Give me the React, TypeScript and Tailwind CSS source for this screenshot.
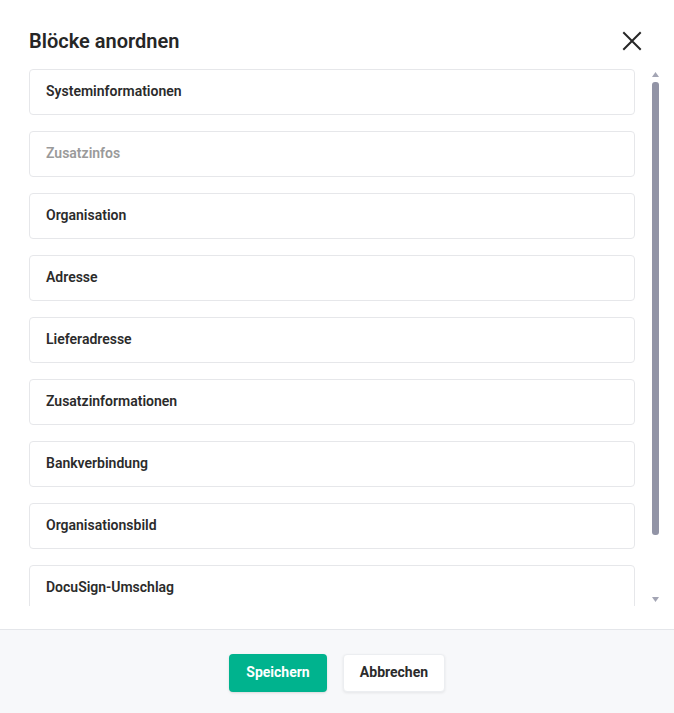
import React from "react";

const items: { label: string; muted?: boolean }[] = [
  { label: "Systeminformationen" },
  { label: "Zusatzinfos", muted: true },
  { label: "Organisation" },
  { label: "Adresse" },
  { label: "Lieferadresse" },
  { label: "Zusatzinformationen" },
  { label: "Bankverbindung" },
  { label: "Organisationsbild" },
  { label: "DocuSign-Umschlag" },
];

export default function App() {
  return (
    <div
      className="w-[674px] h-[713px] bg-white flex flex-col overflow-hidden"
      style={{ fontFamily: "Roboto, 'Noto Sans', sans-serif" }}
    >
      <div className="flex items-center justify-between pl-[29px] pr-[31px] pt-[27px] h-[55px] shrink-0">
        <h2 className="text-[20px] leading-[28px] font-semibold text-[#262626]">Blöcke anordnen</h2>
        <button className="w-[22px] h-[22px] flex items-center justify-center text-[#262626]">
          <svg width="20" height="20" viewBox="0 0 20 20" fill="none" stroke="currentColor" strokeWidth="2" strokeLinecap="square">
            <path d="M2 2 L18 18 M18 2 L2 18" />
          </svg>
        </button>
      </div>
      <div className="flex pl-[29px] pr-[12px] mt-[14px] h-[537px] shrink-0">
        <div className="flex-1 overflow-hidden flex flex-col gap-[16px]">
          {items.map((it) => (
            <div
              key={it.label}
              className="h-[46px] shrink-0 border border-[#e6e7ea] rounded-[4px] flex items-center pl-[16px] pb-[2px] bg-white"
            >
              <span
                className={`text-[14px] font-semibold ${it.muted ? "text-[#9a9a9a]" : "text-[#2b2b2b]"}`}
              >
                {it.label}
              </span>
            </div>
          ))}
        </div>
        <div className="w-[14px] ml-[13px] flex flex-col items-center pt-[2px] pb-[4px]">
          <svg width="7" height="5" viewBox="0 0 7 5" className="mt-[1px]">
            <path d="M3.5 0 L7 5 L0 5 Z" fill="#a3a5b4" />
          </svg>
          <div className="w-[7px] h-[453px] mt-[5px] rounded-[3px] bg-[#9294a6]" />
          <div className="flex-1" />
          <svg width="7" height="5" viewBox="0 0 7 5">
            <path d="M0 0 L7 0 L3.5 5 Z" fill="#a3a5b4" />
          </svg>
        </div>
      </div>
      <div className="h-[23px] shrink-0" />
      <div className="flex-1 bg-[#f7f8fa] border-t border-[#e4e6ea] flex justify-center items-start pt-[24px] gap-[16px]">
        <button className="w-[98px] h-[38px] pb-[2px] rounded-[4px] bg-[#00b38e] text-white text-[14px] font-bold shadow-sm">
          Speichern
        </button>
        <button className="w-[102px] h-[38px] pb-[2px] rounded-[4px] bg-white border border-[#eceef1] text-[#2b2b2b] text-[14px] font-bold shadow-[0_1px_3px_rgba(0,0,0,0.08)]">
          Abbrechen
        </button>
      </div>
    </div>
  );
}
